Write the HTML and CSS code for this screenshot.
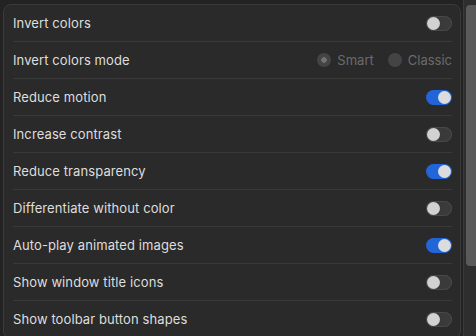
FILE: index.html
```html
<!DOCTYPE html>
<html lang="en">
<head>
    <meta charset="UTF-8">
    <meta name="viewport" content="width=device-width, initial-scale=1.0">
    <title>Accessibility Display</title>
    <link rel="stylesheet" href="styles.css">
</head>
<body>
    <div class="window">
        <div class="pane">
            <div class="card">
                <div class="row">
                    <span class="label">Invert colors</span>
                    <span class="toggle"></span>
                </div>
                <div class="row">
                    <span class="label">Invert colors mode</span>
                    <div class="radios">
                        <span class="radio checked">Smart</span>
                        <span class="radio">Classic</span>
                    </div>
                </div>
                <div class="row">
                    <span class="label">Reduce motion</span>
                    <span class="toggle on"></span>
                </div>
                <div class="row">
                    <span class="label">Increase contrast</span>
                    <span class="toggle"></span>
                </div>
                <div class="row">
                    <span class="label">Reduce transparency</span>
                    <span class="toggle on"></span>
                </div>
                <div class="row">
                    <span class="label">Differentiate without color</span>
                    <span class="toggle"></span>
                </div>
                <div class="row">
                    <span class="label">Auto-play animated images</span>
                    <span class="toggle on"></span>
                </div>
                <div class="row">
                    <span class="label">Show window title icons</span>
                    <span class="toggle"></span>
                </div>
                <div class="row">
                    <span class="label">Show toolbar button shapes</span>
                    <span class="toggle"></span>
                </div>
            </div>
        </div>
        <div class="scrollbar">
            <div class="thumb"></div>
        </div>
    </div>
</body>
</html>
```

FILE: styles.css
```css
html, body {
    margin: 0;
    padding: 0;
    height: 100%;
    overflow: hidden;
}
body {
    background-color: #232323;
    font-family: Inter, "Noto Sans", sans-serif;
    font-size: 13px;
    color: #dedede;
}
.window {
    display: flex;
    height: 336px;
}
.pane {
    width: 466px;
    padding: 4px 0 0 3px;
    box-sizing: border-box;
}
.card {
    width: 458px;
    box-sizing: border-box;
    background-color: #2a2a2a;
    border: 1px solid #3b3b3b;
    border-radius: 8px;
    padding: 0 8px 0 9px;
}
.row {
    height: 37px;
    display: flex;
    align-items: center;
    justify-content: space-between;
    border-bottom: 1px solid #393939;
    box-sizing: border-box;
}
.label {
    letter-spacing: 0.1px;
}
.toggle {
    position: relative;
    width: 26px;
    height: 15px;
    border-radius: 8px;
    background-color: #3a3a3a;
    box-shadow: inset 0 0 0 1px #484848;
}
.toggle::after {
    content: "";
    position: absolute;
    top: 1px;
    left: 1px;
    width: 13px;
    height: 13px;
    border-radius: 50%;
    background-color: #d2d2d2;
}
.toggle.on {
    background-color: #2265d8;
    box-shadow: none;
}
.toggle.on::after {
    left: 12px;
    background-color: #dcdcdc;
}
.radios {
    display: flex;
    gap: 14px;
}
.radio {
    display: flex;
    align-items: center;
    gap: 6px;
    color: #6a6a6a;
}
.radio::before {
    content: "";
    width: 14px;
    height: 14px;
    border-radius: 50%;
    background-color: #444;
    box-sizing: border-box;
}
.radio.checked::before {
    background: radial-gradient(circle, #727272 0 2.5px, #444 3px);
}
.scrollbar {
    width: 10px;
    border-left: 1px solid #3a3a3a;
    background-color: #2e2e2e;
    padding: 5px 0 0 2px;
}
.thumb {
    height: 261px;
    background-color: #5a5a5a;
    border-radius: 4px 0 0 4px;
}
```
